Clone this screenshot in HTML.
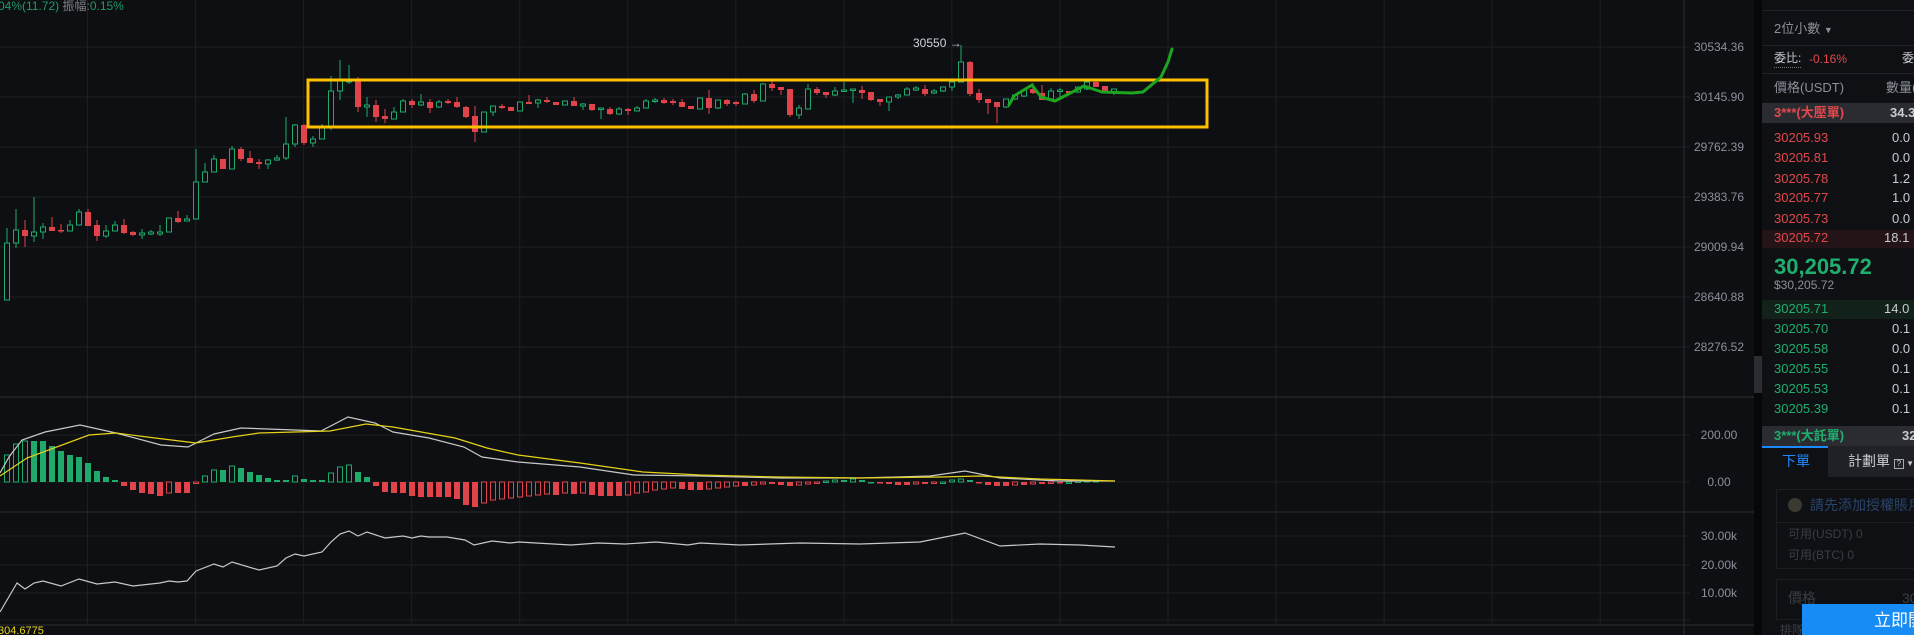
<!DOCTYPE html>
<html><head><meta charset="utf-8">
<style>
*{margin:0;padding:0;box-sizing:border-box}
body{width:1914px;height:635px;overflow:hidden;background:#0e0f12;font-family:"Liberation Sans","Noto Sans CJK TC",sans-serif;position:relative}
.t{position:absolute;white-space:nowrap;line-height:1}
#ob{position:absolute;left:1762px;top:0;width:152px;height:635px;background:#0f1013;overflow:hidden}
.r{color:#e2484c}.g{color:#1fae6e}.q{color:#c9ccd2}
</style></head><body>
<svg id="c" width="1754" height="635" style="position:absolute;left:0;top:0"></svg>
<div class="t" style="left:-2px;top:0;font-size:12px;color:#1f9a66">04%(11.72) <span style="color:#7d8088">振幅:</span>0.15%</div>
<div class="t" style="left:913px;top:37px;font-size:12px;color:#cfd3dc">30550 →</div>
<div style="position:absolute;left:1754px;top:0;width:8px;height:635px;background:#060709"></div>
<div style="position:absolute;left:1754px;top:356px;width:8px;height:37px;background:#2b2d33"></div>
<div id="ob">
<div style="position:absolute;left:0;top:10px;width:152px;height:1px;background:#222429"></div>
<div class="t" style="left:12px;top:22px;font-size:13px;color:#8a8f99">2位小數 <span style="font-size:9px">▼</span></div>
<div style="position:absolute;left:0;top:45px;width:152px;height:1px;background:#222429"></div>
<div class="t" style="left:12px;top:52px;font-size:12px;color:#c9ccd2;border-bottom:1px dotted #777;padding-bottom:3px">委比:</div>
<div class="t r" style="left:47px;top:53px;font-size:12px">-0.16%</div>
<div class="t" style="left:140px;top:52px;font-size:12px;color:#c9ccd2">委</div>
<div style="position:absolute;left:0;top:73px;width:152px;height:1px;background:#222429"></div>
<div class="t" style="left:12px;top:81px;font-size:13px;color:#8a8f99">價格(USDT)</div>
<div class="t" style="left:124px;top:81px;font-size:13px;color:#8a8f99">數量(</div>
<div style="position:absolute;left:0;top:103px;width:152px;height:20px;background:#2a2c31"></div>
<div class="t r" style="left:12px;top:106px;font-size:13px;font-weight:bold">3***(大壓單)</div>
<div class="t q" style="left:128px;top:106px;font-size:13px;font-weight:bold">34.3</div>
<div style="position:absolute;left:0;top:230px;width:152px;height:18px;background:#241417"></div>
<div style="position:absolute;left:0;top:300px;width:152px;height:19px;background:#122119"></div>
<div id="rows"></div>
<div class="t g" style="left:12px;top:256px;font-size:22px;font-weight:bold">30,205.72</div>
<div class="t" style="left:12px;top:279px;font-size:12px;color:#8a8f99">$30,205.72</div>
<div style="position:absolute;left:0;top:426px;width:152px;height:20px;background:#2a2c31"></div>
<div class="t g" style="left:12px;top:429px;font-size:13px;font-weight:bold">3***(大託單)</div>
<div class="t q" style="left:140px;top:429px;font-size:13px;font-weight:bold">32</div>
<div style="position:absolute;left:0;top:446px;width:66px;height:2px;background:#1e88ff"></div>
<div style="position:absolute;left:66px;top:446px;width:86px;height:31px;background:#1f2126"></div>
<div class="t" style="left:20px;top:454px;font-size:14px;color:#1e88ff">下單</div>
<div class="t" style="left:86px;top:454px;font-size:14px;color:#c9ccd2">計劃單 <span style="display:inline-block;width:10px;height:10px;border:1px solid #aaa;font-size:8px;text-align:center;line-height:8px">?</span><span style="font-size:8px"> ▼</span></div>
<div style="position:absolute;left:14px;top:489px;width:150px;height:80px;border:1px solid #1c1e22"></div>
<div style="position:absolute;left:14px;top:522px;width:150px;height:1px;background:#1c1e22"></div>
<div style="position:absolute;left:26px;top:498px;width:14px;height:14px;border-radius:50%;background:#3a3a30"></div>
<div class="t" style="left:48px;top:498px;font-size:14px;color:#29446b">請先添加授權賬戶</div>
<div class="t" style="left:26px;top:528px;font-size:12px;color:#3a3d43">可用(USDT) 0</div>
<div class="t" style="left:26px;top:549px;font-size:12px;color:#3a3d43">可用(BTC) 0</div>
<div style="position:absolute;left:14px;top:579px;width:150px;height:41px;border:1px solid #1c1e22"></div>
<div class="t" style="left:26px;top:591px;font-size:14px;color:#3a3d43">價格</div>
<div class="t" style="left:140px;top:591px;font-size:14px;color:#3a3d43">30</div>
<div class="t" style="left:18px;top:624px;font-size:12px;color:#3a3d43">排隊</div>
<div style="position:absolute;left:40px;top:604px;width:112px;height:31px;background:#178cf5"></div>
<div class="t" style="left:112px;top:612px;font-size:17px;color:#fff">立即開</div>
</div>
<script>
var rows=document.getElementById('rows'),h='';
var asks=[['30205.93','0.0'],['30205.81','0.0'],['30205.78','1.2'],['30205.77','1.0'],['30205.73','0.0'],['30205.72','18.1']];
var ay=[138,158,179,198,219,238];
asks.forEach(function(a,i){h+='<div class="t r" style="left:12px;top:'+(ay[i]-7)+'px;font-size:13px">'+a[0]+'</div><div class="t q" style="left:'+(a[1].length>3?122:130)+'px;top:'+(ay[i]-7)+'px;font-size:13px">'+a[1]+'</div>';});
var bids=[['30205.71','14.0'],['30205.70','0.1'],['30205.58','0.0'],['30205.55','0.1'],['30205.53','0.1'],['30205.39','0.1']];
var by=[309,329,349,369,389,409];
bids.forEach(function(a,i){h+='<div class="t g" style="left:12px;top:'+(by[i]-7)+'px;font-size:13px">'+a[0]+'</div><div class="t q" style="left:'+(a[1].length>3?122:130)+'px;top:'+(by[i]-7)+'px;font-size:13px">'+a[1]+'</div>';});
rows.innerHTML=h;

var s='';var G='#1faa6c',R='#e0444a',GR='#1d1f24';
// grid
for(var x=87.5;x<1684;x+=108.05)s+='<line x1="'+x+'" y1="0" x2="'+x+'" y2="625" stroke="'+GR+'"/>';
[47,97,147,197,247,297,347,435,482,536,565,593,620].forEach(function(y){s+='<line x1="0" y1="'+y+'" x2="1690" y2="'+y+'" stroke="'+GR+'"/>';});
[397,512,625].forEach(function(y){s+='<line x1="0" y1="'+y+'" x2="1754" y2="'+y+'" stroke="#2c2e33"/>';});
s+='<line x1="1684" y1="0" x2="1684" y2="635" stroke="#2c2e33"/>';
var lab=[[47,'30534.36'],[97,'30145.90'],[147,'29762.39'],[197,'29383.76'],[247,'29009.94'],[297,'28640.88'],[347,'28276.52'],[435,'200.00'],[482,'0.00'],[536,'30.00k'],[565,'20.00k'],[593,'10.00k']];
lab.forEach(function(l){s+='<text x="1719" y="'+(l[0]+4)+'" fill="#8a909c" font-size="12" text-anchor="middle" font-family="Liberation Sans">'+l[1]+'</text>';});
// candles [o,c,h,l] y-values ; green if c<o
var C=[[300,243,228,300],[243,230,209,248],[230,236,220,247],[236,232,197,242],[232,227,223,239],[227,231,217,231],[230,231,224,233],[231,225,220,231],[225,212,209,225],[212,226,209,226],[225,236,220,241],[236,231,225,238],[231,225,221,231],[225,233,219,234],[232,235,231,236],[235,233,229,239],[234,232,230,235],[234,232,225,236],[232,218,218,232],[218,222,211,223],[221,219,215,221],[219,182,149,219],[182,172,163,182],[172,159,155,172],[159,169,159,169],[169,149,146,169],[149,159,147,161],[158,163,151,163],[162,164,159,169],[164,160,159,169],[160,158,155,161],[158,144,117,160],[144,125,124,147],[125,143,124,145],[143,139,136,147],[139,128,124,139],[128,91,76,130],[91,81,60,100],[82,80,65,84],[81,107,77,112],[107,105,97,117],[105,117,100,122],[116,119,109,123],[119,112,107,119],[112,101,99,112],[101,105,99,108],[105,102,94,106],[102,108,99,113],[107,102,100,108],[101,103,99,104],[102,107,97,108],[107,117,106,118],[116,132,106,142],[132,112,112,132],[112,106,106,116],[106,108,104,109],[107,111,107,111],[111,102,102,111],[102,104,95,104],[103,100,99,108],[100,102,97,103],[102,105,102,105],[105,101,101,105],[101,106,97,106],[106,104,103,110],[104,110,104,111],[109,108,108,119],[109,114,107,115],[114,109,107,115],[109,111,108,115],[111,108,106,111],[108,101,99,108],[101,100,98,103],[100,103,98,104],[101,103,99,105],[102,107,99,107],[106,109,106,109],[109,98,98,109],
[98,108,90,114],[108,100,100,109],[100,104,99,106],[102,104,101,106],[104,94,93,104],[94,101,90,103],[101,84,83,101],[84,88,81,91],[87,90,87,95],[89,115,89,117],[115,108,105,119],[109,89,84,109],[89,93,87,95],[92,95,92,98],[95,91,87,96],[91,90,82,92],[90,89,89,103],[90,93,86,99],[92,100,92,101],[99,102,99,106],[102,97,97,111],[97,95,94,99],[95,89,87,95],[90,88,86,91],[89,94,85,96],[93,91,89,94],[91,87,87,92],[87,82,80,91],[82,62,45,82],[62,94,61,96],[93,100,89,103],[99,103,99,114],[102,107,102,123],[107,99,99,108],[99,95,95,100],[96,90,90,97],[89,93,83,94],[93,100,85,100],[99,91,88,99],[91,90,88,97],[91,93,91,93],[92,87,87,93],[89,82,82,90],[82,87,80,87],[86,91,86,91],[93,89,89,95]];
C.forEach(function(c,i){var x=7+9*i,up=c[1]<c[0],col=up?G:R,t=Math.min(c[0],c[1]),b=Math.max(c[0],c[1]),hh=Math.max(b-t,1.5);
s+='<line x1="'+x+'" y1="'+c[2]+'" x2="'+x+'" y2="'+c[3]+'" stroke="'+col+'"/>';
if(up)s+='<rect x="'+(x-2.5)+'" y="'+t+'" width="5" height="'+hh+'" fill="#0e0f12" stroke="'+col+'"/>';
else s+='<rect x="'+(x-3)+'" y="'+t+'" width="6" height="'+hh+'" fill="'+col+'"/>';});
// box
s+='<rect x="308" y="80" width="899" height="47" fill="none" stroke="#ffc000" stroke-width="3"/>';
// hand drawn
s+='<polyline points="1009,105 1014,96 1032,85 1041,97 1055,101 1084,86 1102,92 1132,93 1143,92 1161,77 1168,62 1172,49" fill="none" stroke="#1ea51e" stroke-width="3" stroke-linejoin="round" stroke-linecap="round"/>';
// macd hist
var H=[455,444,441,441,441,446,451,455,457,463,471,477,480,486,490,493,494,496,493,493,493,483,476,470,470,466,468,472,475,478,480,480,476,479,480,480,473,467,465,472,477,486,492,493,493,496,497,497,497,497,499,505,507,503,500,499,498,497,496,495,494,495,493,494,493,495,496,496,496,495,493,492,490,489,488,489,490,490,
489,488,487,486,486,485,484,484,485,486,485,484,483,481,480,480,479,480,482,483,484,485,485,484,484,483,482,480,479,480,483,485,486,486,485,485,484,484,483,483,482,481,481,481];
var prev=0;H.forEach(function(y,i){var x=7+9*i,v=482-y,col=v>=0?G:R,hol=v>prev;prev=v;var t=Math.min(y,482),hh=Math.max(Math.abs(v),1.5);
if(hol)s+='<rect x="'+(x-2.5)+'" y="'+t+'" width="5" height="'+hh+'" fill="none" stroke="'+col+'"/>';else s+='<rect x="'+(x-3)+'" y="'+t+'" width="6" height="'+hh+'" fill="'+col+'"/>';});
s+='<polyline points="0,473 9,457 22,440 45,432 80,425 116,433 161,445 188,447 214,434 241,428 295,430 321,431 348,417 375,423 393,432 429,438 464,447 482,457 518,462 580,467 634,475 700,476 780,478 860,478 930,476 965,471 1000,478 1060,481 1115,481" fill="none" stroke="#c8c8c8" stroke-width="1.2"/>';
s+='<polyline points="0,476 27,458 89,435 116,433 147,437 196,443 232,437 259,433 330,431 366,424 393,427 455,438 487,448 518,455 580,463 643,472 700,475 780,477 860,478 940,477 980,476 1040,479 1115,481" fill="none" stroke="#e6d21a" stroke-width="1.2"/>';
// volume line
var V=[[0,612],[17,583],[25,589],[34,583],[43,581],[61,586],[79,579],[97,584],[115,582],[133,586],[160,583],[169,581],[178,582],[187,581],[196,571],[214,564],[223,567],[232,562],[259,570],[277,566],[286,558],[295,554],[304,556],[322,552],[331,542],[340,534],[349,531],[358,536],[367,532],[385,538],[403,536],[412,538],[421,536],[429,537],[447,537],[465,540],[474,545],[492,541],[510,543],[519,542],[536,543],[571,545],[598,543],[625,544],[656,542],[688,545],[700,543],[740,545],[800,543],[860,544],[920,542],[965,533],[1000,546],[1040,544],[1080,545],[1115,547]];
s+='<polyline points="'+V.map(function(p){return p.join(',')}).join(' ')+'" fill="none" stroke="#c8c8c8" stroke-width="1.2"/>';
s+='<text x="-2" y="634" fill="#e6d21a" font-size="11" font-family="Liberation Sans">304.6775</text>';
document.getElementById('c').innerHTML=s;
</script>
</body></html>
